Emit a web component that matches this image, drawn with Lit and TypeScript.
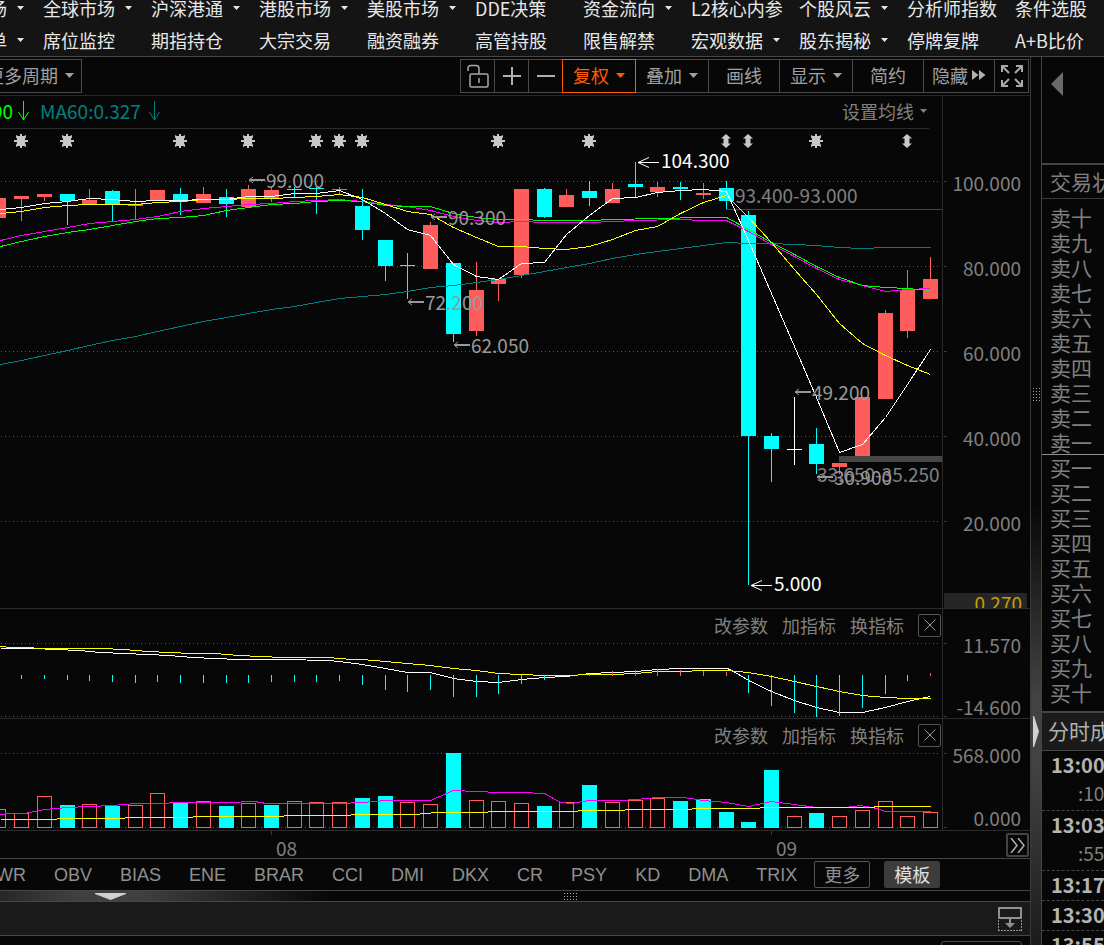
import { LitElement, html, svg, css } from "lit";
import { customElement } from "lit/decorators.js";
import { classMap } from "lit/directives/class-map.js";

type Tone = "up" | "down" | "flat";
// x, tone, body top, body bottom, high, low
type Candle = [number, Tone, number, number, number, number];

const CANDLES: Candle[] = [
  [-2, "up", 198, 218, 198, 218], [21, "up", 196, 199, 196, 221], [44, "up", 194, 197, 194, 201],
  [67, "down", 194, 201, 194, 225], [89, "up", 200, 204, 189, 204], [112, "down", 191, 204, 190, 221],
  [135, "up", 204, 206, 189, 219], [157, "up", 190, 200, 190, 200], [180, "down", 194, 202, 188, 215],
  [203, "up", 194, 203, 187, 203], [226, "down", 197, 204, 189, 217], [248, "up", 189, 207, 185, 207],
  [271, "up", 190, 199, 187, 202], [294, "down", 189, 190, 187, 197], [316, "down", 188, 189, 186, 214],
  [339, "up", 189, 190, 187, 194], [362, "down", 206, 230, 189, 240], [385, "down", 240, 266, 240, 281],
  [407, "down", 265, 266, 253, 299], [430, "up", 225, 269, 222, 269], [453, "down", 263, 334, 263, 342],
  [476, "up", 290, 331, 262, 336], [498, "up", 279, 284, 279, 301], [521, "up", 189, 275, 189, 278],
  [544, "down", 189, 217, 188, 218], [566, "up", 195, 207, 189, 207], [589, "down", 191, 198, 181, 206],
  [612, "up", 189, 203, 183, 203], [635, "down", 184, 187, 162, 197], [657, "up", 187, 192, 182, 197],
  [680, "down", 187, 189, 182, 200], [703, "up", 193, 195, 183, 199], [726, "down", 188, 201, 181, 209],
  [748, "down", 215, 436, 211, 585], [771, "down", 436, 449, 433, 482], [794, "flat", 449, 450, 397, 465],
  [816, "down", 444, 464, 428, 474], [839, "up", 463, 467, 463, 474], [862, "up", 397, 456, 397, 456],
  [885, "up", 313, 399, 310, 399], [907, "up", 290, 331, 270, 338], [930, "up", 279, 299, 257, 299],
];

const MA: [string, string][] = [
  ["teal", "0,364 21,360 44,355 67,350 89,345 112,340 135,336 157,331 180,326 203,321 226,317 248,313 271,309 294,306 316,302 339,298 362,296 385,294 407,291 430,287 453,285 476,282 498,279 521,275 544,271 566,267 589,263 612,258 635,254 657,251 703,245 726,242 748,243 771,243 794,244 816,245 839,247 862,248 885,247 930,247"],
  ["magenta", "0,240 21,235 44,231 67,227 89,223 112,221 135,219 157,216 180,211 203,208 226,206 248,204 271,203 294,201 316,200 339,199 362,201 385,204 407,206 430,210 453,216 476,220 498,222 521,221 544,222 589,222 612,221 635,220 680,219 703,220 726,220 748,231 771,244 794,256 816,268 839,279 862,285 885,291 907,289 930,288"],
  ["green", "0,246 21,241 44,236 67,232 89,229 112,225 135,221 157,218 180,217 203,215 226,210 248,207 271,204 294,203 316,201 339,200 362,201 385,205 407,206 430,206 453,213 476,217 498,219 521,219 544,220 589,220 612,219 657,218 703,217 726,217 748,229 771,242 794,254 816,266 839,277 862,285 885,287 907,288 930,290"],
  ["yellow", "0,213 21,211 44,207 67,205 89,204 135,204 157,202 180,201 203,199 226,199 248,198 271,198 294,197 316,196 339,194 362,197 385,204 407,211 430,214 453,227 476,237 498,246 521,246 544,248 566,249 589,246 612,239 635,230 657,226 680,213 703,202 726,195 748,217 771,242 794,269 816,294 839,323 862,343 885,355 907,365 930,374"],
  ["white", "0,209 21,207 44,203 67,201 89,198 112,199 135,201 157,200 180,200 203,199 226,199 248,196 271,196 294,193 316,193 339,190 362,199 385,213 407,229 430,235 453,264 476,276 498,279 521,263 544,262 566,234 589,215 612,198 635,197 657,192 680,190 703,189 726,191 748,240 771,293 794,346 816,397 839,452 862,444 885,417 907,384 930,349"],
];

const MACD: [string, string][] = [
  ["white", "0,648 33,648 56,649 79,650 100,652 124,653 147,654 169,655 192,657 215,658 238,659 283,659 328,660 339,661 362,664 385,668 407,672 430,672 453,678 476,681 498,682 521,679 544,677 566,676 589,673 612,672 635,671 657,669 680,668 726,668 730,669 748,680 771,691 794,700 816,707 839,712 862,712 885,707 907,701 930,696"],
  ["yellow", "0,646 10,647 56,648 101,648 124,649 147,651 169,652 192,653 215,653 238,655 260,656 283,657 328,657 351,659 362,659 385,661 407,663 430,665 453,668 476,670 498,673 521,674 544,675 566,675 589,674 612,674 635,673 657,671 680,671 703,670 726,670 748,672 771,676 794,681 816,686 839,691 862,695 885,697 907,698 930,698"],
];

// x, end of bar; bars hang from the zero line
const MACD_DOWN: [number, number][] = [
  [21, 679], [44, 679], [67, 680], [89, 681], [112, 682], [135, 683], [157, 682], [180, 683], [203, 683],
  [226, 683], [248, 683], [271, 682], [294, 682], [316, 682], [339, 681], [362, 685], [385, 690], [407, 692],
  [430, 690], [453, 697], [476, 697], [498, 694], [521, 684], [544, 680], [748, 693], [771, 706], [794, 713],
  [816, 717], [839, 716], [862, 708], [885, 694], [907, 681],
];
const MACD_UP: [number, number][] = [
  [589, 674], [612, 671], [635, 670], [657, 669], [680, 670], [703, 671], [726, 672], [930, 673],
];

const VOLUME: [number, boolean, number][] = [
  [-2, true, 809], [21, true, 813], [44, true, 796], [67, false, 805], [89, true, 804], [112, false, 806],
  [135, true, 805], [157, true, 793], [180, false, 803], [203, true, 801], [226, false, 806], [248, true, 803],
  [271, false, 805], [294, true, 801], [316, true, 802], [339, true, 802], [362, false, 798], [385, false, 796],
  [407, true, 802], [430, true, 804], [453, false, 753], [476, true, 800], [498, true, 801], [521, true, 803],
  [544, false, 806], [566, true, 802], [589, false, 785], [612, true, 802], [635, true, 800], [657, true, 798],
  [680, false, 801], [703, false, 799], [726, false, 812], [748, false, 822], [771, false, 770], [794, true, 816],
  [816, false, 813], [839, true, 816], [862, true, 810], [885, true, 801], [907, true, 816], [930, true, 812],
];
const VOLUME_MA: [string, string][] = [
  ["magenta", "0,814 10,813 24,813 44,809 67,807 89,806 112,805 135,803 157,803 180,802 236,802 245,801 254,801 266,803 339,803 362,802 385,800 430,800 453,790 476,791 498,792 521,792 544,793 560,802 571,803 589,800 620,800 635,799 657,797 683,797 703,800 726,802 748,806 771,801 794,804 816,807 845,807 860,805 876,808 885,811 930,811"],
  ["yellow", "0,819 56,819 57,818 124,818 125,817 192,817 193,816 283,816 284,815 350,815 351,814 419,814 420,813 441,812 487,812 488,811 577,811 578,810 624,810 625,809 691,809 692,808 759,808 760,807 872,807 876,806 930,806"],
];

const MENU: [string, boolean][][] = [
  [["场", true], ["全球市场", true], ["沪深港通", true], ["港股市场", true], ["美股市场", true], ["DDE决策", false], ["资金流向", true], ["L2核心内参", false], ["个股风云", true], ["分析师指数", false], ["条件选股", false]],
  [["单", true], ["席位监控", false], ["期指持仓", false], ["大宗交易", false], ["融资融券", false], ["高管持股", false], ["限售解禁", false], ["宏观数据", true], ["股东揭秘", true], ["停牌复牌", false], ["A+B比价", false]],
];

const INDICATORS = ["WR", "OBV", "BIAS", "ENE", "BRAR", "CCI", "DMI", "DKX", "CR", "PSY", "KD", "DMA", "TRIX"];
const NUMERALS = ["一", "二", "三", "四", "五", "六", "七", "八", "九", "十"];
const TRADES: [string, string][] = [["13:00", ":10"], ["13:03", ":55"], ["13:17", ""], ["13:30", ""], ["13:55", ""]];

const caret = () => html`<svg class="caret" width="9" height="5" viewBox="0 0 9 5" aria-hidden="true"><path d="M0 0h9L4.5 5z" fill="currentColor"/></svg>`;
const lines = (set: [string, string][]) =>
  set.map(([c, p]) => svg`<polyline class="ln ${c}" points=${p} transform="translate(.5 .5)"/>`);
const gridLine = (y: number) => svg`<path class="dots" d="M1 ${y + 0.5}H939"/><path class="tick" d="M944 ${y + 0.5}h3"/>`;
const axisLabel = (text: string, y: number) => svg`<text class="axis" x="1021" y=${y}>${text}</text>`;
const note = (x: number, y: number, text: string) => svg`
  <path class="thin" d="M${x + 5} ${y - 3}l-4 3l4 3"/><path class="shaft" d="M${x + 2} ${y}h15"/>
  <text class="note" x=${x + 18} y=${y + 8}>${text}</text>`;
const peak = (x: number, y: number, text: string) => svg`
  <path class="peak-arrow" d="M${x} ${y + 0.5}h21M${x + 11} ${y - 4.5}L${x} ${y + 0.5}l11 5"/>
  <text class="peak" x=${x + 23} y=${y + 6}>${text}</text>`;

@customElement("app-root")
export class AppRoot extends LitElement {
  static styles = css`
    :host {
      display: flex; flex-direction: column; height: 100vh; overflow: hidden;
      background: #070707; color: #a0a0a0;
      font: 18px/18px "Noto Sans CJK SC", sans-serif; white-space: nowrap;
    }
    * { box-sizing: border-box; }
    button, a { font: inherit; color: inherit; background: none; border: 0; padding: 0; margin: 0; text-decoration: none; cursor: pointer; white-space: nowrap; }
    svg { display: block; flex: none; }
    .menu {
      display: grid; flex: none; grid-template-columns: 65px repeat(10, 108px); grid-auto-rows: 16px; row-gap: 16px;
      margin-left: -11px; padding-bottom: 8px; background: #141414; border-bottom: 1px solid #464646; color: #e8e8e8; overflow: hidden;
    }
    .menu { grid-template-columns: 54px repeat(10, 108px); }
    .menu > * { display: flex; align-items: center; gap: 10px; line-height: 16px; }
    .menu .caret { width: 7px; height: 4px; }
    .body { flex: 1; min-height: 0; display: grid; grid-template-columns: minmax(0, 1fr) 10px 63px; }
    .main { display: flex; flex-direction: column; min-width: 0; overflow: hidden; border-right: 1px solid #383838; }
    .toolbar { flex: none; display: flex; justify-content: space-between; padding: 2px 1px 2px 0; border-bottom: 1px solid #262626; overflow: hidden; }
    .tool { display: flex; align-items: center; justify-content: center; gap: 7px; height: 34px; padding-bottom: 2px; border: 1px solid #4a4a4a; }
    .period { margin-left: -24px; width: 106px; padding-left: 2px; }
    .tools { display: flex; }
    .tools .tool { width: 74px; margin-right: -1px; }
    .tools .tool:last-child { margin-right: 0; }
    .tools .icon { width: 35px; padding-bottom: 0; }
    .tools .mid { width: 72px; }
    .tools .active { color: #ff5a00; border-color: #ff5a00; z-index: 1; }
    .mid.tight { gap: 4px; }
    .head { flex: none; display: grid; grid-template-columns: minmax(0, 1fr) 88px; }
    .head::after { content: ""; border-left: 1px solid #2c2c2c; }
    .averages { display: flex; align-items: center; justify-content: space-between; height: 33px; margin-right: 13px; padding-bottom: 2px; border-bottom: 1px solid #2c2c2c; }
    .values { display: flex; align-items: center; gap: 5px; font-size: 19px; margin-left: -8px; }
    .green-text { color: #00ff00; }
    .teal-text { color: #008080; margin: 0 3px 0 6px; }
    .setting { display: flex; align-items: center; gap: 6px; color: #808080; padding-right: 2px; }
    .setting .caret { width: 7px; height: 4px; }
    .actions { display: flex; align-items: center; justify-content: flex-end; gap: 14px; height: 34px; color: #808080; padding: 0 1px 2px 0; }
    .close { width: 23px; height: 23px; display: grid; place-items: center; border: 1px solid #555; border-radius: 2px; }
    .plot { flex: none; display: flex; justify-content: flex-end; border-bottom: 1px solid #2c2c2c; }
    .lower svg { overflow: visible; }
    .dates { border-color: #464646; padding-right: 1px; height: 28px; }
    .next { flex: none; width: 23px; height: 24px; margin-top: 2px; display: grid; place-items: center; border: 2px solid #444; border-radius: 2px; }
    .indicators { flex: none; display: flex; align-items: center; height: 32px; border-bottom: 1px solid #464646; font-family: "Liberation Sans", sans-serif; color: #909090; gap: 28px; overflow: hidden; }
    .indicators > :first-child { margin-left: -4px; }
    .pills { display: flex; gap: 14px; margin-left: -11px; }
    .pill { width: 56px; height: 27px; border: 1px solid #555; border-radius: 2px; padding-bottom: 1px; font-family: "Noto Sans CJK SC", sans-serif; }
    .pill.on { background: #3c3c3c; border-color: #3c3c3c; color: #e0e0e0; }
    .hsplit { flex: none; display: flex; height: 11px; align-items: center; border-bottom: 1px solid #464646; background: linear-gradient(90deg, #262626 0, #404040 75px, #404040 140px, #070707 330px); }
    .hsplit .fold { margin-left: 95px; }
    .hsplit .grip { margin-left: 438px; }
    .bar { flex: none; display: flex; align-items: center; justify-content: flex-end; height: 34px; background: #1a1a1a; border-bottom: 1px solid #464646; padding-right: 8px; }
    .stub { flex: none; align-self: flex-end; width: 81px; height: 24px; margin: 5px 8px 0 0; border: 1px solid #4a4a4a; border-radius: 3px; }
    .vsplit { display: flex; flex-direction: column; align-items: center; background: linear-gradient(180deg, #070707 50%, #424242 72%, #424242 80%, #1c1c1c 100%); }
    .vsplit .grip { margin-top: 331px; }
    .vsplit .fold { margin-top: 315px; }
    .side { border-left: 1px solid #444; overflow: hidden; font-size: 21px; color: #808080; display: flex; flex-direction: column; }
    .back { flex: none; display: flex; height: 108px; padding: 15px 0 0 9px; border-bottom: 2px solid #444; width: 100%; }
    .status { flex: none; height: 34px; line-height: 33px; padding-left: 8px; border-bottom: 1px solid #3a3a3a; }
    .book { flex: none; margin: 0; padding: 6px 0 0 8px; list-style: none; line-height: 25px; }
    .book + .book { margin-top: -1px; border-top: 1px solid #909090; padding: 0 0 6px 8px; }
    .deals { flex: none; height: 40px; line-height: 35px; padding-left: 6px; color: #b0b0b0; background: #1a1a1a; border-top: 2px solid #444; border-bottom: 1px solid #464646; }
    .ticks { margin: 0; padding: 0; list-style: none; font-size: 20px; line-height: 28px; }
    .ticks li { border-bottom: 1px dashed #464646; padding-left: 9px; height: 30px; }
    .ticks li.double { height: 60px; }
    .ticks b { display: block; color: #b4b4b4; }
    .ticks span { display: block; font-size: 19px; padding-left: 27px; }

    .up { fill: #ff5c5c; } .down { fill: #00ffff; } .flat { fill: #fff; }
    .hollow { fill: none; stroke: #ff5c5c; }
    .crisp { shape-rendering: crispEdges; }
    .ln { fill: none; stroke-width: 1; shape-rendering: crispEdges; }
    .white { stroke: #fff; } .yellow { stroke: #ff0; } .magenta { stroke: #f0f; } .green { stroke: #0f0; } .teal { stroke: #008080; }
    .dots { stroke: #5a5a5a; stroke-dasharray: 1 3; shape-rendering: crispEdges; }
    .tick { stroke: #3a3a3a; shape-rendering: crispEdges; }
    .frame { stroke: #2c2c2c; shape-rendering: crispEdges; }
    .gap { fill: #464646; }
    .axis, .note, .peak, .range, .date { font-size: 19px; }
    .axis { fill: #808080; text-anchor: end; }
    .last { fill: #c8a000; }
    .date, .range { fill: #808080; }
    .note { fill: #999; }
    .peak { fill: #fff; }
    .thin { stroke: #999; fill: none; }
    .shaft { stroke: #999; stroke-width: 2; }
    .peak-arrow { stroke: #fff; fill: none; }
    .mark { fill: #c8c8c8; }
  `;

  private menu() {
    return html`<nav class="menu">${MENU.map(row => row.map(([label, more]) => more
      ? html`<button type="button" aria-haspopup="true">${label}${caret()}</button>`
      : html`<a href="#">${label}</a>`))}</nav>`;
  }

  private toolbar() {
    const tool = (label: string, more: boolean, extra: Record<string, boolean> = {}) =>
      html`<button type="button" class=${classMap({ tool: true, ...extra })}>${label}${more ? caret() : ""}</button>`;
    return html`<div class="toolbar">
      <button type="button" class="tool period">更多周期${caret()}</button>
      <div class="tools">
        <button type="button" class="tool icon" aria-label="解锁"><svg width="22" height="24" viewBox="0 0 22 24" fill="none" stroke="#a8a8a8" stroke-width="1.5"><rect x="3" y="10" width="18" height="13" rx="1.5"/><path d="M1 7V4.5Q1 1.500 4 1.500H9Q12 1.500 12 4.500V10M12 14v5"/></svg></button>
        <button type="button" class="tool icon" aria-label="放大"><svg width="18" height="18" viewBox="0 0 18 18" stroke="#b0b0b0" stroke-width="2"><path d="M0 9h18M9 0v18"/></svg></button>
        <button type="button" class="tool icon" aria-label="缩小"><svg width="18" height="18" viewBox="0 0 18 18" stroke="#b0b0b0" stroke-width="2"><path d="M0 9h18"/></svg></button>
        ${tool("复权", true, { active: true })}
        ${tool("叠加", true)}
        ${tool("画线", false, { mid: true })}
        ${tool("显示", true)}
        ${tool("简约", false, { mid: true })}
        <button type="button" class="tool mid tight">隐藏<svg width="14" height="10" viewBox="0 0 14 10" fill="#b0b0b0"><path d="M0 0l6.500 5L0 10zM7 0l6.500 5L7 10z"/></svg></button>
        <button type="button" class="tool icon" aria-label="全屏"><svg width="22" height="22" viewBox="0 0 22 22" fill="none" stroke="#a8a8a8" stroke-width="2"><path d="M1 7V1h6M15 1h6v6M21 15v6h-6M7 21H1v-6M2 2l6 6M20 2l-6 6M20 20l-6-6M2 20l6-6"/></svg></button>
      </div>
    </div>`;
  }

  private priceChart() {
    const arrow = (color: string) => html`<svg width="11" height="20" viewBox="0 0 11 20" fill="none" stroke=${color}><path d="M5.500 0v19M.5 11l5 8l5-8"/></svg>`;
    return html`
      <div class="head"><div class="averages">
        <div class="values">
          <span class="green-text">90</span>${arrow("#00ff00")}
          <span class="teal-text">MA60:0.327</span>${arrow("#008080")}
        </div>
        <button type="button" class="setting">设置均线${caret()}</button>
      </div></div>
      <div class="plot"><svg width="1030" height="479" viewBox="0 129 1030 479" role="img" aria-label="K线图">
        <path class="frame" d="M942.500 129V608"/>
        ${[181, 266, 351, 436, 521].map(gridLine)}
        ${[21, 67, 180, 248, 316, 339, 362, 498, 589, 816].map(x => svg`<path class="mark" transform="translate(${x} 141)" d="M-1-7h2v2h2l2-1v2l-1 2v1h3v2h-3v1l1 2v2l-2-1h-2v2h-2v-2h-2l-2 1v-2l1-2v-1h-3v-2h3v-1l-1-2v-2l2 1h2z"/>`)}
        ${[726, 748, 907].map(x => svg`<path class="mark" transform="translate(${x} 141)" d="M0-7L5-2.500H2.500V2.500H5L0 7L-5 2.500H-2.500V-2.500H-5z"/>`)}
        <path class="gap" d="M726 209h216v1H726zM839 456h103v6H839z"/>
        <g class="crisp">${CANDLES.map(([x, tone, top, bottom, high, low]) => svg`<path class=${tone} d="M${x} ${high}h1V${low}h-1zM${x - 7} ${top}h15V${bottom}h-15z"/>`)}</g>
        ${lines(MA)}
        <text class="range" x="735" y="203">93.400-93.000</text>
        <text class="range" x="817" y="482">33.650-35.250</text>
        ${note(248, 180, "99.000")}${note(430, 217, "90.300")}${note(407, 302, "72.200")}
        ${note(453, 345, "62.050")}${note(794, 392, "49.200")}${note(816, 477, "30.900")}
        ${peak(638, 162, "104.300")}${peak(751, 585, "5.000")}
        ${["100.000", "80.000", "60.000", "40.000", "20.000"].map((t, i) => axisLabel(t, 191 + i * 85))}
        <rect x="944" y="593" width="83" height="15" fill="#262626"/>
        <text class="axis last" x="1022" y="611">0.270</text>
      </svg></div>`;
  }

  private actions() {
    return html`<div class="head"><div class="actions">
      <button type="button">改参数</button><button type="button">加指标</button><button type="button">换指标</button>
      <button type="button" class="close" aria-label="关闭"><svg width="12" height="12" viewBox="0 0 12 12" stroke="#999"><path d="M.5.5l11 11M11.500.5l-11 11"/></svg></button>
    </div></div>`;
  }

  private lowerCharts() {
    return html`
      ${this.actions()}
      <div class="plot lower"><svg width="1030" height="75" viewBox="0 643 1030 75" role="img" aria-label="MACD">
        <path class="frame" d="M942.500 643V718"/>
        ${[643, 716].map(gridLine)}
        ${lines(MACD)}
        <g class="crisp">
          ${MACD_DOWN.map(([x, y]) => svg`<path class="down" d="M${x} 675h1V${y}h-1z"/>`)}
          ${MACD_UP.map(([x, y]) => svg`<path class="up" d="M${x} ${y}h1V676h-1z"/>`)}
        </g>
        ${axisLabel("11.570", 653)}${axisLabel("-14.600", 715)}
      </svg></div>
      ${this.actions()}
      <div class="plot lower"><svg width="1030" height="77" viewBox="0 753 1030 77" role="img" aria-label="成交量">
        <path class="frame" d="M942.500 753V830"/>
        ${[753, 827].map(gridLine)}
        <g class="crisp">${VOLUME.map(([x, up, y]) => up
          ? svg`<rect class="hollow" x=${x - 6.5} y=${y + 0.5} width="14" height=${827 - y}/>`
          : svg`<rect class="down" x=${x - 7} y=${y} width="15" height=${828 - y}/>`)}</g>
        ${lines(VOLUME_MA)}
        ${axisLabel("568.000", 763)}${axisLabel("0.000", 826)}
      </svg></div>
      <div class="plot dates"><svg width="1006" height="27" viewBox="0 831 1006 27">
        <path class="tick" d="M271.500 831v4M771.500 831v4"/>
        <text class="date" x="276" y="856">08</text><text class="date" x="776" y="856">09</text>
      </svg><button type="button" class="next" aria-label="下一页"><svg width="15" height="15" viewBox="0 0 15 15" fill="none" stroke="#b0b0b0" stroke-width="1.500"><path d="M1 0l6 7.500L1 15M8 0l6 7.500L8 15"/></svg></button></div>`;
  }

  private footer() {
    return html`
      <div class="indicators">
        ${INDICATORS.map(name => html`<button type="button">${name}</button>`)}
        <div class="pills"><button type="button" class="pill">更多</button><button type="button" class="pill on">模板</button></div>
      </div>
      <div class="hsplit">
        <svg class="fold" width="31" height="7" viewBox="0 0 31 7" fill="#d0d0d0"><path d="M0 0h31v1L15.500 7L0 1z"/></svg>
        <svg class="grip" width="13" height="7" viewBox="0 0 13 7" stroke="#b0b0b0" stroke-dasharray="1 2"><path d="M0 .5h13M0 3.500h13M0 6.500h13"/></svg>
      </div>
      <div class="bar"><button type="button" aria-label="停靠"><svg width="24" height="24" viewBox="0 0 24 24" fill="none" stroke="#909090"><path d="M1 1h22v10H1z" stroke-width="2"/><path d="M.5 13v11M23.500 13v11M0 23.500h24" stroke-dasharray="2 1"/><path d="M12 12v6" stroke-width="2"/><path d="M7 16h10l-5 5z" fill="#909090" stroke="none"/></svg></button></div>
      <div class="stub"></div>`;
  }

  private side() {
    return html`<aside class="side">
      <button type="button" class="back" aria-label="返回"><svg width="12" height="24" viewBox="0 0 12 24" fill="#6a6a6a"><path d="M12 0v24L0 12z"/></svg></button>
      <div class="status">交易状态</div>
      <ul class="book">${[...NUMERALS].reverse().map(n => html`<li>卖${n}</li>`)}</ul>
      <ul class="book">${NUMERALS.map(n => html`<li>买${n}</li>`)}</ul>
      <div class="deals">分时成交</div>
      <ul class="ticks">${TRADES.map(([time, sec]) => html`<li class=${classMap({ double: !!sec })}><b>${time}</b>${sec ? html`<span>${sec}</span>` : ""}</li>`)}</ul>
    </aside>`;
  }

  render() {
    return html`
      ${this.menu()}
      <div class="body">
        <main class="main">${this.toolbar()}${this.priceChart()}${this.lowerCharts()}${this.footer()}</main>
        <div class="vsplit">
          <svg class="grip" width="7" height="13" viewBox="0 0 7 13" stroke="#a0a0a0" stroke-dasharray="1 2"><path d="M.5 0v13M3.500 0v13M6.500 0v13"/></svg>
          <svg class="fold" width="6" height="31" viewBox="0 0 6 31" fill="#d0d0d0"><path d="M0 0h1l5 15.500L1 31H0z"/></svg>
        </div>
        ${this.side()}
      </div>`;
  }
}
